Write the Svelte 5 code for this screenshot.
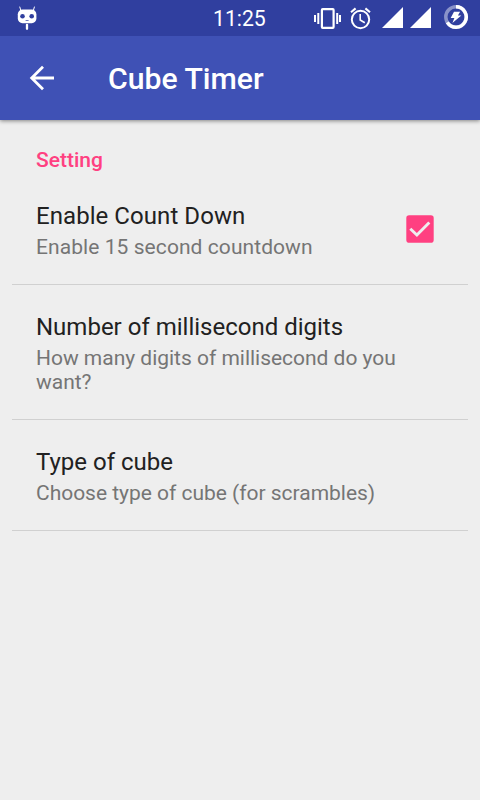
<script>
  let countdown = $state(true);
  const choices = [
    { title: 'Number of millisecond digits', summary: 'How many digits of millisecond do you want?' },
    { title: 'Type of cube', summary: 'Choose type of cube (for scrambles)' }
  ];
</script>

<div class="screen">
  <div class="status">
    <svg class="cid" width="24" height="26" viewBox="15 5 24 26">
      <path d="M19.8 7l1.200 4M34.4 7l-1.200 4" stroke="#fff" stroke-width="1" stroke-linecap="round" />
      <rect x="17.8" y="9.600" width="18.600" height="13.600" rx="4.600" fill="#fff" />
      <circle cx="22.500" cy="16.200" r="2.300" fill="#303f9f" />
      <circle cx="31.700" cy="16.200" r="2.300" fill="#303f9f" />
      <path d="M25.600 20.500h3" stroke="#303f9f" stroke-width=".7" />
      <path d="M27 24.800v4" stroke="#fff" stroke-width="2.300" stroke-linecap="round" />
    </svg>
    <span class="clock">11:25</span>
    <svg class="icons" width="170" height="36" viewBox="310 0 170 36">
      <g fill="none" stroke="#fff">
        <rect x="321.9" y="9.2" width="11.7" height="18.6" rx=".8" stroke-width="2.2" />
        <path d="M318.3 13v11M337.2 13v11M315 15v7M340 15v7" stroke-width="2" />
        <circle cx="360.5" cy="19.5" r="8.7" stroke-width="2" />
        <path d="M360.2 14v6l4.6 2.7" stroke-width="1.6" />
        <path d="M351 12.2l4.6-3.8M370 12.2l-4.6-3.8" stroke-width="2.1" />
      </g>
      <path d="M382 28l21-21v21zM410 28l21-21v21z" fill="#fff" />
      <circle cx="456" cy="17" r="10.2" fill="none" stroke="#8a93c9" stroke-width="3.5" />
      <path d="M456 6.8a10.2 10.2 0 1 1-8.7 15.5" fill="none" stroke="#fff" stroke-width="3.5" />
      <path d="M454 11.7h6.1l-2.2 3.7h3.4l-8.9 7.5 2-5h-3.7z" fill="#fff" />
    </svg>
  </div>

  <header>
    <svg width="26" height="26" viewBox="29 65 26 26" aria-label="Back">
      <path d="M54 78H32M43 66.7L31.7 78 43 89.3" fill="none" stroke="#fff" stroke-width="2.8" />
    </svg>
    <h1>Cube Timer</h1>
  </header>

  <main>
    <h2>Setting</h2>
    <label class="row first">
      <span class="words">
        <span class="title">Enable Count Down</span>
        <span class="summary">Enable 15 second countdown</span>
      </span>
      <input type="checkbox" bind:checked={countdown} />
      <svg class="box" width="28" height="28" viewBox="0 0 28 28">
        <rect x=".3" y=".3" width="27.4" height="27.4" rx="2.8" fill={countdown ? '#ff4081' : '#777'} />
        {#if countdown}
          <path d="M4.3 13.7l6.6 6.3L23.3 7.4" fill="none" stroke="#eee" stroke-width="2.9" />
        {/if}
      </svg>
    </label>
    {#each choices as choice}
      <div class="row">
        <span class="words">
          <span class="title">{choice.title}</span>
          <span class="summary">{choice.summary}</span>
        </span>
      </div>
    {/each}
  </main>
</div>

<style>
  .screen {
    width: 480px;
    height: 800px;
    overflow: hidden;
    display: flex;
    flex-direction: column;
    background: #eee;
    font-family: Roboto, sans-serif;
  }
  .status {
    height: 36px;
    flex: none;
    display: flex;
    background: #303f9f;
    color: #fff;
    z-index: 2;
  }
  .cid { margin: 5px 0 0 15px; }
  .clock {
    width: 97px;
    margin-left: 174px;
    font-size: 21.2px;
    line-height: 38px;
  }
  header {
    height: 84px;
    flex: none;
    box-sizing: border-box;
    display: flex;
    align-items: center;
    padding-left: 29px;
    background: #3f51b5;
    box-shadow: 0 1px 4px rgba(0, 0, 0, .45);
    z-index: 1;
  }
  h1 {
    margin: 2px 0 0 53px;
    color: #fff;
    font-size: 30.2px;
    line-height: 36px;
    font-weight: 500;
  }
  main { padding: 0 12px; }
  h2 {
    margin: 28px 0 0 24px;
    font-size: 21px;
    line-height: 24px;
    font-weight: 500;
    color: #ff4081;
  }
  .row {
    display: flex;
    align-items: center;
    box-sizing: border-box;
    padding: 26px 34px 25px 24px;
    border-bottom: 1px solid #d0d0d0;
  }
  .first { padding-top: 28px; }
  .words {
    display: flex;
    flex-direction: column;
    gap: 3px;
    flex: 1;
  }
  .title {
    font-size: 24px;
    line-height: 32px;
    color: #212121;
  }
  .summary {
    font-size: 21px;
    line-height: 24px;
    letter-spacing: -.02px;
    color: #757575;
  }
  .first .title { letter-spacing: .06px; }
  .first .summary { letter-spacing: .07px; }
  input {
    position: absolute;
    opacity: 0;
  }
  .box { flex: none; margin-bottom: 1px; }
</style>
